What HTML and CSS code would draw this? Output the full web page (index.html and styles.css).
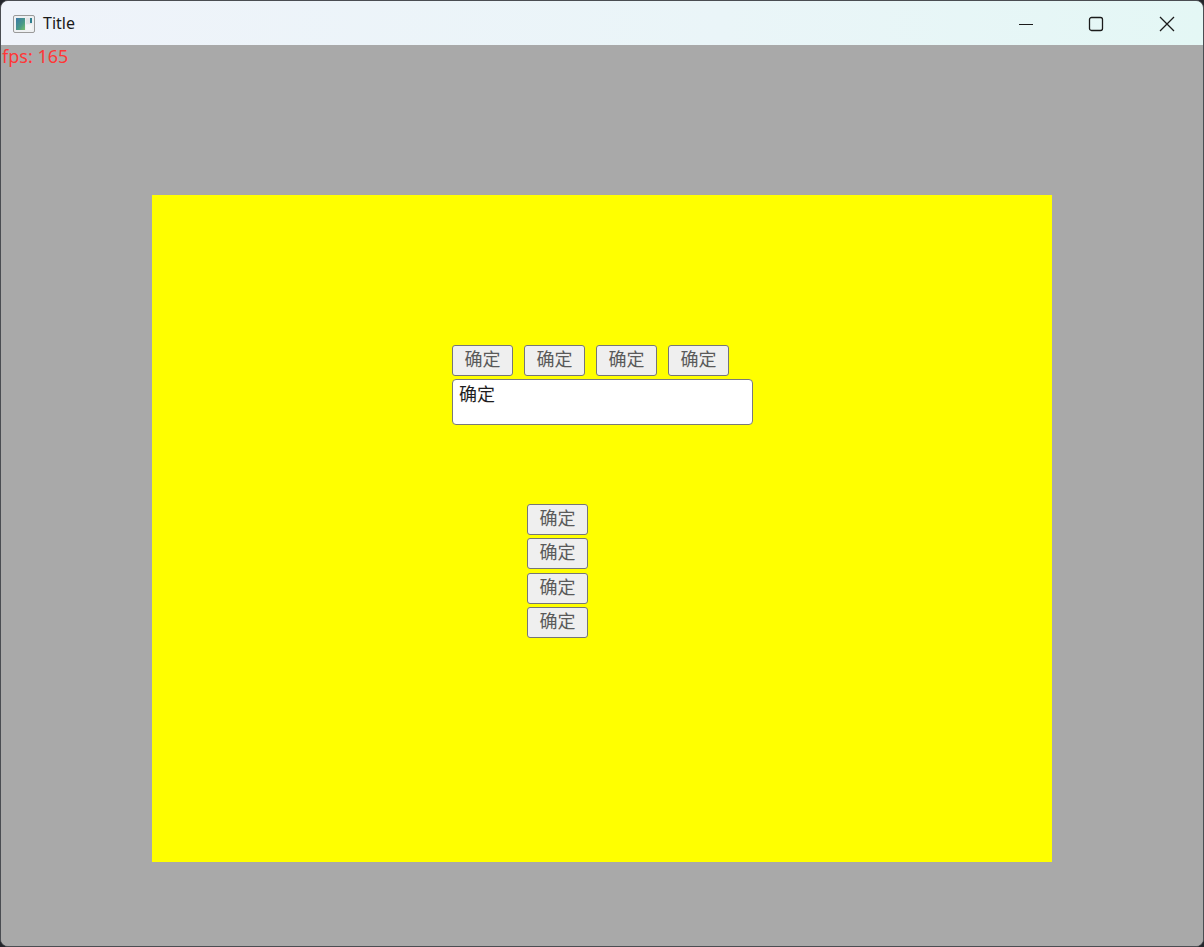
FILE: index.html
```html
<!DOCTYPE html>
<html>
<head>
<meta charset="utf-8">
<title>Title</title>
<link rel="stylesheet" href="styles.css">
</head>
<body>
<div class="window">
  <div class="titlebar">
    <div class="app-title">
      <svg class="app-icon" width="22" height="18" viewBox="0 0 22 18">
        <defs>
          <linearGradient id="g1" x1="0" y1="0" x2="1" y2="1">
            <stop offset="0" stop-color="#3b78a8"/>
            <stop offset="0.6" stop-color="#4a9a86"/>
            <stop offset="1" stop-color="#7cc06a"/>
          </linearGradient>
        </defs>
        <rect x="0.5" y="0.5" width="21" height="17" rx="1.5" fill="#eef0f2" stroke="#9a9a9a"/>
        <rect x="3" y="3" width="9" height="12" fill="url(#g1)"/>
        <rect x="13" y="3" width="6" height="6" fill="#e2e4e6"/>
        <rect x="17" y="3" width="2" height="5" fill="#2f7f8f"/>
        <rect x="13" y="10" width="6" height="5" fill="#f5f6f7"/>
      </svg>
      <span class="title-text">Title</span>
    </div>
    <div class="controls">
      <div class="ctl">
        <svg width="16" height="16" viewBox="0 0 16 16"><path d="M1 8.5H15" stroke="#1b1b1b" stroke-width="1.2"/></svg>
      </div>
      <div class="ctl">
        <svg width="16" height="16" viewBox="0 0 16 16"><rect x="1.5" y="1.5" width="13" height="13" rx="2" fill="none" stroke="#1b1b1b" stroke-width="1.3"/></svg>
      </div>
      <div class="ctl">
        <svg width="16" height="16" viewBox="0 0 16 16"><path d="M1 1L15 15M15 1L1 15" stroke="#1b1b1b" stroke-width="1.3"/></svg>
      </div>
    </div>
  </div>
  <div class="content">
    <div class="fps">fps: 165</div>
    <div class="panel">
      <div class="group">
        <div class="row">
          <button class="btn">确定</button>
          <button class="btn">确定</button>
          <button class="btn">确定</button>
          <button class="btn">确定</button>
        </div>
        <div class="textbox">确定</div>
        <div class="column">
          <button class="btn">确定</button>
          <button class="btn">确定</button>
          <button class="btn">确定</button>
          <button class="btn">确定</button>
        </div>
      </div>
    </div>
  </div>
</div>
</body>
</html>
```

FILE: styles.css
```css
html, body {
  margin: 0;
  padding: 0;
  width: 1204px;
  height: 947px;
  background: #23262b;
  overflow: hidden;
}

.window {
  box-sizing: border-box;
  width: 1204px;
  height: 947px;
  border: 1px solid #4a4d52;
  border-radius: 8px;
  overflow: hidden;
  display: flex;
  flex-direction: column;
  background: #a9a9a9;
}

.titlebar {
  height: 44px;
  flex: none;
  display: flex;
  align-items: center;
  justify-content: space-between;
  background: linear-gradient(90deg, #eff3fa 0%, #eaf5f8 60%, #e4f7f5 100%);
}

.app-title {
  display: flex;
  align-items: center;
  padding-left: 12px;
}

.app-icon {
  display: block;
  margin-top: 1px;
}

.title-text {
  margin-left: 8px;
  font-family: "Noto Sans", "Liberation Sans", sans-serif;
  font-size: 16px;
  color: #1a1a1a;
}

.controls {
  display: flex;
  height: 100%;
}

.ctl {
  width: 70px;
  height: 100%;
  display: flex;
  align-items: center;
  justify-content: center;
}

.ctl:nth-child(3) { width: 72px; }

.ctl svg {
  display: block;
  margin-top: 1px;
}

.content {
  flex: 1;
  position: relative;
  padding: 150px 0 0 151px;
  box-sizing: border-box;
  background: #a9a9a9;
}

.fps {
  position: absolute;
  left: 1px;
  top: -1px;
  font-family: "Noto Sans", "Liberation Sans", sans-serif;
  font-size: 18px;
  line-height: 24px;
  color: #ff3636;
}

.panel {
  width: 900px;
  height: 667px;
  background: #ffff00;
  box-sizing: border-box;
  padding: 150px 0 0 300px;
}

.group {
  display: flex;
  flex-direction: column;
  align-items: flex-start;
}

.row {
  display: flex;
  gap: 11px;
}

.btn {
  box-sizing: border-box;
  width: 61px;
  height: 31px;
  margin: 0;
  padding: 0 0 5px 0;
  border: 1px solid #767676;
  border-radius: 3px;
  background: #efefef;
  color: #5a5a5a;
  font-family: "Noto Sans CJK SC", "Noto Sans", sans-serif;
  font-size: 18px;
  line-height: 24px;
  text-align: center;
}

.textbox {
  box-sizing: border-box;
  width: 301px;
  height: 46px;
  margin-top: 3px;
  border: 1px solid #7a7a7a;
  border-radius: 4px;
  background: #ffffff;
  padding: 1px 0 0 6px;
  font-family: "Noto Sans CJK SC", "Noto Sans", sans-serif;
  font-size: 18px;
  line-height: 24px;
  color: #1e1e1e;
}

.column {
  display: flex;
  flex-direction: column;
  gap: 3.33px;
  margin-top: 79px;
  margin-left: 75px;
}
```
